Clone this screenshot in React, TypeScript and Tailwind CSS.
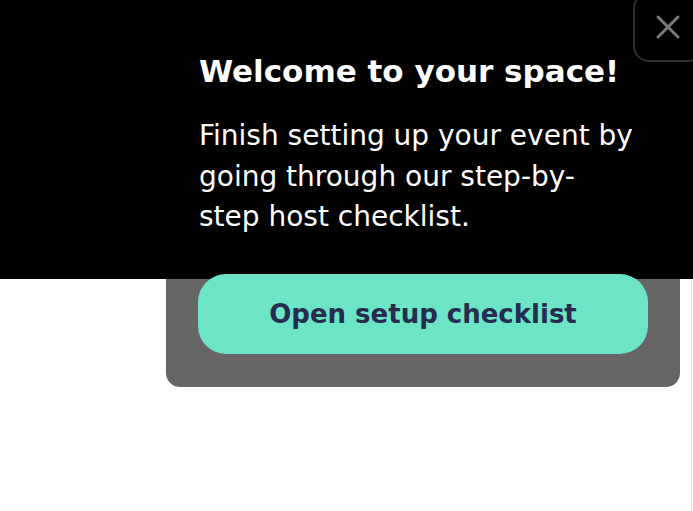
import { X } from 'lucide-react';

export default function App() {
  return (
    <div
      className="relative w-[693px] h-[511px] overflow-hidden bg-white"
      style={{ fontFamily: '"DejaVu Sans", Inter, sans-serif' }}
    >
      <div className="flex flex-col">
        <div className="h-[279px] bg-black pl-[199px] pt-[51px] pr-[40px]">
          <h1 className="text-[31px] leading-[40px] font-bold text-white">
            Welcome to your space!
          </h1>
          <p className="mt-[25px] text-[28px] leading-[40.5px] text-white">
            Finish setting up your event by
            <br />
            going through our step-by-
            <br />
            step host checklist.
          </p>
        </div>
        <div className="ml-[166px] w-[514px] h-[108px] rounded-b-[14px] bg-[#666666] px-[32px]">
          <button className="relative z-10 -mt-[5px] flex h-[80px] w-[450px] items-center justify-center rounded-[28px] bg-[#6be5c6] text-[26px] font-bold text-[#262b4f]">
            Open setup checklist
          </button>
        </div>
      </div>
      <button className="absolute left-[633px] -top-[8px] flex h-[70px] w-[70px] items-center justify-center rounded-[16px] border-2 border-[#2e2e2e] bg-black">
        <X size={40} strokeWidth={1.8} className="text-[#7a7a7a]" />
      </button>
      <div className="absolute right-[1px] top-[279px] h-[232px] w-[1px] bg-[#e6e6e6]" />
    </div>
  );
}
